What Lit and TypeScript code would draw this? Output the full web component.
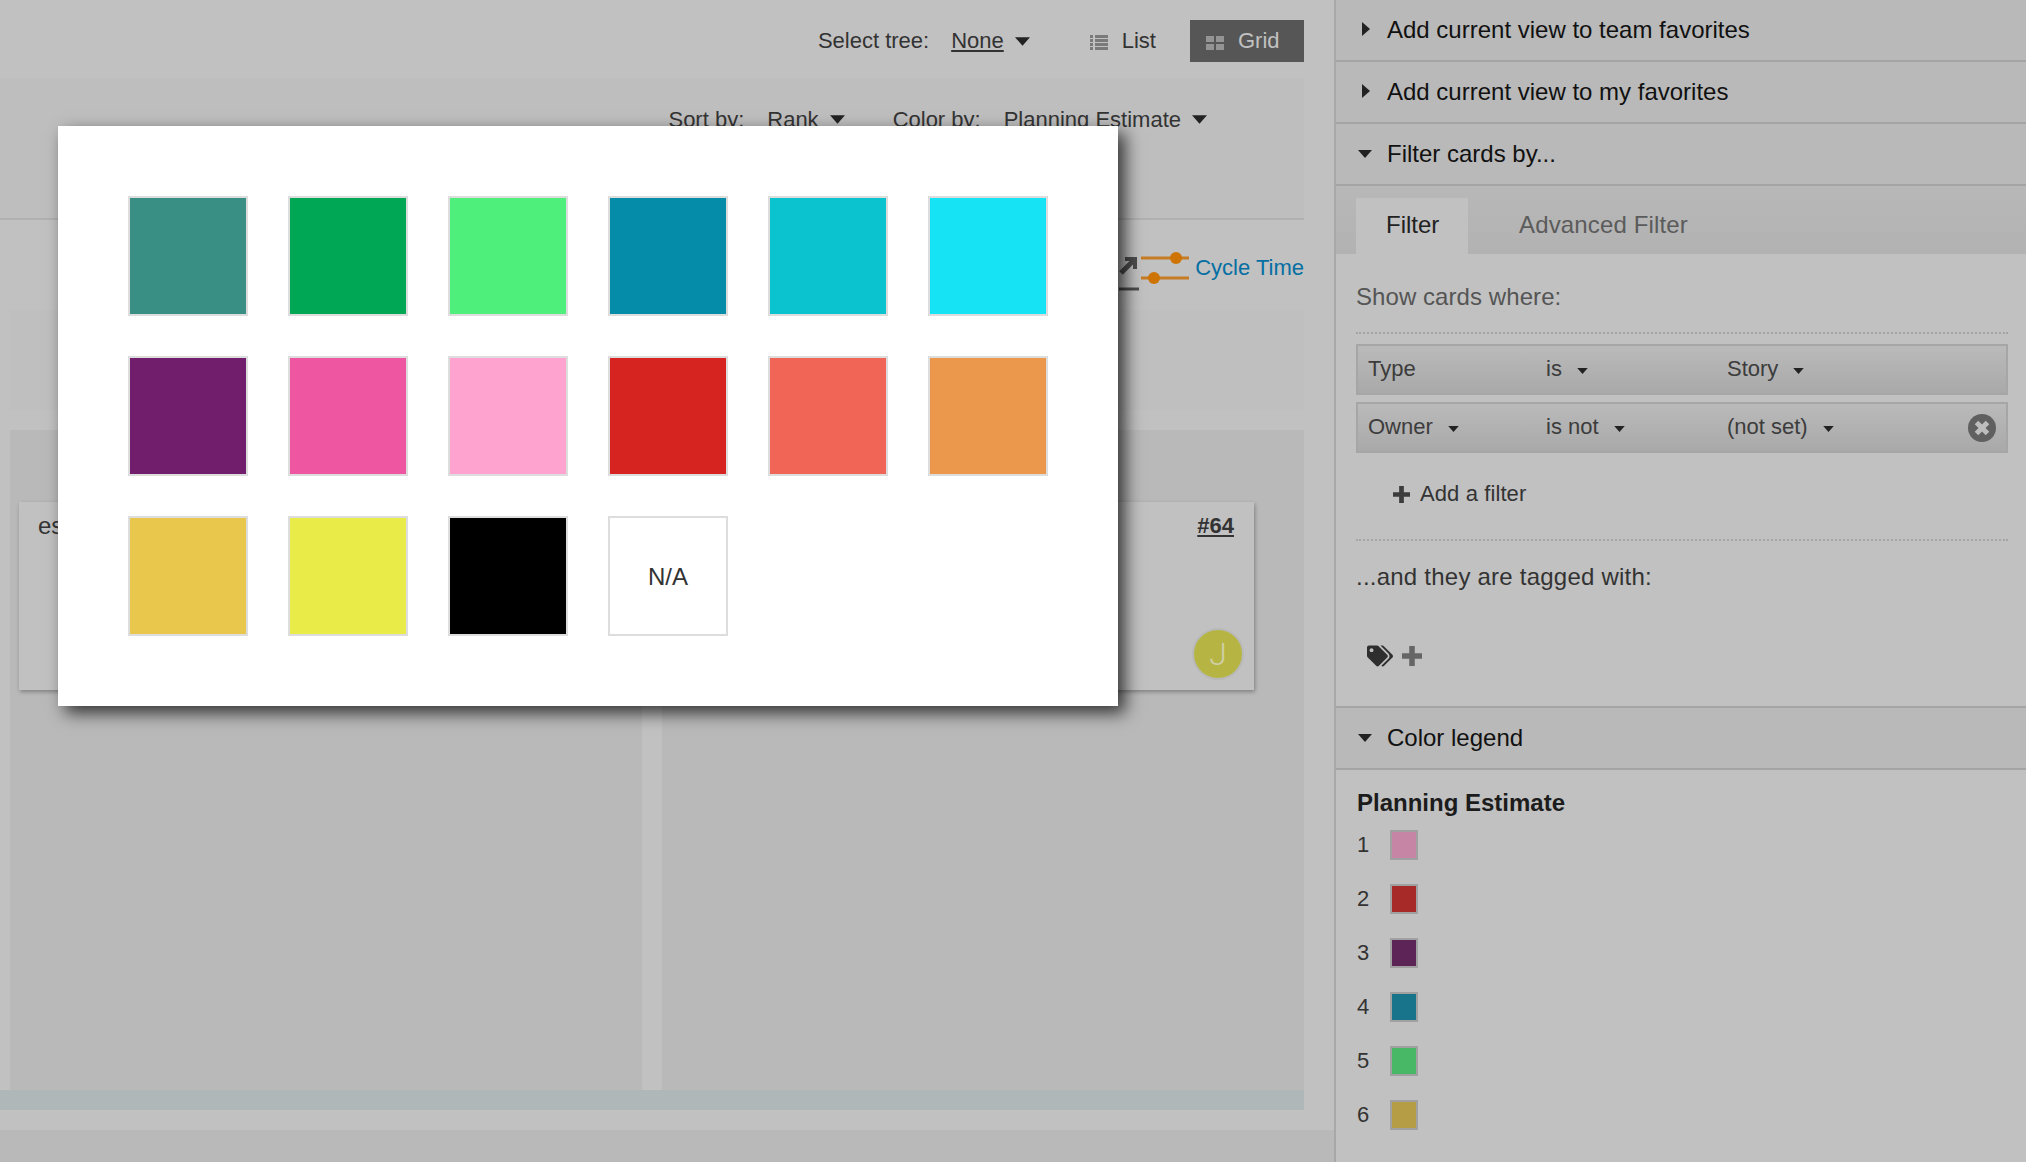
import { LitElement, html, css, svg } from 'lit';
import { customElement } from 'lit/decorators.js';

const SWATCHES = [
  '#398f83', '#00a755', '#4fef7b', '#058ca8', '#0bc2cf', '#16e4f4',
  '#711e6c', '#ee56a2', '#fea3d0', '#d62520', '#f06555', '#ec984c',
  '#e9c64c', '#e9ec48', '#000000',
];

const LEGEND = [
  ['1', '#c785a6'],
  ['2', '#a72a28'],
  ['3', '#5c2457'],
  ['4', '#17748a'],
  ['5', '#49b866'],
  ['6', '#b49d45'],
];

const caret = (w: number, h: number, cls = '') => html`
  <svg class="caret ${cls}" width=${w} height=${h} viewBox="0 0 14 8"><path d="M0 0h14L7 8z" /></svg>
`;

const arrowRight = html`
  <svg class="caret" width="8" height="14" viewBox="0 0 8 14"><path d="M0 0l8 7-8 7z" /></svg>
`;

const plus = (size: number, color: string) => html`
  <svg width=${size} height=${size} viewBox="0 0 18 18" style="fill:${color}"><path d="M6.5 0h5v6.5H18v5h-6.5V18h-5v-6.5H0v-5h6.5z" /></svg>
`;

const tagsPath = svg`<path d="M497.941 225.941L286.059 14.059A48 48 0 0 0 252.118 0H48C21.49 0 0 21.49 0 48v204.118a48 48 0 0 0 14.059 33.941l211.882 211.882c18.744 18.745 49.136 18.746 67.882 0l204.118-204.118c18.745-18.745 18.745-49.137 0-67.882zM112 160c-26.51 0-48-21.49-48-48s21.49-48 48-48 48 21.49 48 48-21.49 48-48 48zm513.941 133.823L421.823 497.941c-18.745 18.745-49.137 18.745-67.882 0l-.36-.36L527.64 323.522c16.999-16.999 26.36-39.6 26.36-63.64s-9.362-46.641-26.36-63.64L331.397 0h48.721a48 48 0 0 1 33.941 14.059l211.882 211.882c18.745 18.745 18.745 49.137 0 67.882z" />`;

@customElement('app-root')
export class AppRoot extends LitElement {
  static styles = css`
    :host {
      display: block;
      position: relative;
      width: 2026px;
      height: 1162px;
      overflow: hidden;
      background: #c1c1c1;
      font-family: 'Liberation Sans', Arial, sans-serif;
      font-size: 22px;
      color: #333;
    }

    * {
      box-sizing: border-box;
    }

    .page {
      display: flex;
      height: 100%;
    }

    .caret {
      fill: #222;
      flex: none;
    }

    /* left side */
    .left {
      width: 1336px;
      flex: none;
      display: flex;
      flex-direction: column;
      border-right: 2px solid #a8a8a8;
    }

    .main {
      width: 1304px;
      flex: none;
    }

    .topbar {
      height: 78px;
      padding-top: 4px;
      display: flex;
      align-items: center;
      justify-content: flex-end;
    }

    .tree-label {
      margin-right: 22px;
    }

    .tree-value {
      text-decoration: underline;
      margin-right: 11px;
    }

    .view-list {
      display: flex;
      align-items: center;
      gap: 14px;
      margin: 0 34px 0 60px;
    }

    .view-list svg,
    .view-grid svg {
      margin-top: 3px;
    }

    .view-grid {
      display: flex;
      align-items: center;
      gap: 14px;
      width: 114px;
      height: 42px;
      padding-left: 16px;
      background: #565656;
      color: #c1c1c1;
    }

    .tools {
      height: 142px;
      padding: 28px 97px 0 0;
      display: flex;
      justify-content: flex-end;
      align-items: flex-start;
      line-height: 28px;
      background: #bebebe;
      border-bottom: 2px solid #b0b0b0;
    }

    .tools .label {
      margin-right: 23px;
    }

    .tools .label.color {
      margin-right: 23px;
      margin-left: 1px;
    }

    .tools .value {
      margin-right: 11px;
    }

    .tools .caret {
      margin-top: 9px;
    }

    .tools .caret.first {
      margin-right: 47px;
    }

    .cycle {
      height: 90px;
      display: flex;
      align-items: center;
      justify-content: flex-end;
      color: #046fa3;
      padding-top: 6px;
    }

    .cycle-arrow {
      margin-right: 2px;
      margin-top: 12px;
    }

    .cycle-icon {
      margin-right: 6px;
    }

    .band {
      height: 100px;
      margin-left: 10px;
      background: #bfbfbf;
    }

    .board {
      height: 660px;
      margin: 20px 0 0 10px;
      display: grid;
      grid-template-columns: 632px 642px;
      gap: 20px;
    }

    .column {
      background: #b9b9b9;
      padding-top: 72px;
    }

    .column.first {
      padding-left: 9px;
      padding-right: 40px;
    }

    .column.second {
      padding-left: 40px;
      padding-right: 50px;
    }

    .card {
      height: 188px;
      background: #c1c1c1;
      box-shadow: 1px 2px 4px rgba(0, 0, 0, 0.3);
      font-size: 24px;
      display: flex;
      flex-direction: column;
    }

    .card .desc {
      padding: 10px 0 0 19px;
    }

    .card .id {
      align-self: flex-end;
      margin: 11px 20px 0 0;
      font-size: 22px;
      font-weight: bold;
      text-decoration: underline;
      line-height: 26px;
    }

    .avatar {
      align-self: flex-end;
      margin: auto 10px 10px 0;
      width: 52px;
      height: 52px;
      border-radius: 50%;
      background: #b6b543;
      border: 2px solid #b9b9b9;
      color: #cfcfa5;
      font-family: Roboto, sans-serif;
      font-size: 32px;
      font-weight: 300;
      display: flex;
      align-items: center;
      justify-content: center;
    }

    .hscroll {
      height: 20px;
      background: #afb7b9;
    }

    .gutter {
      height: 20px;
    }

    .footer {
      flex: 1;
      background: #b9b9b9;
    }

    /* sidebar */
    .side {
      flex: 1;
      min-width: 0;
    }

    .head {
      height: 62px;
      display: flex;
      align-items: center;
      position: relative;
      padding-left: 51px;
      font-size: 24px;
      color: #111;
      background: #b9b9b9;
      border-bottom: 2px solid #a4a4a4;
    }

    .head .caret {
      position: absolute;
      left: 26px;
      top: 22px;
    }

    .head .caret.down {
      left: 22px;
      top: 26px;
    }

    .head.top-line {
      height: 64px;
      border-top: 2px solid #a4a4a4;
    }

    .tabs {
      height: 68px;
      padding: 12px 0 0 20px;
      display: flex;
      background: linear-gradient(#b8b8b8, #b2b2b2);
      font-size: 24px;
    }

    .tab {
      height: 54px;
      display: flex;
      align-items: center;
      padding: 0 30px;
      color: #5b5b5b;
      letter-spacing: 0.15px;
    }

    .tab.on {
      height: 56px;
      padding-bottom: 2px;
      width: 112px;
      padding-left: 30px;
      padding-right: 0;
      background: #c1c1c1;
      color: #222;
      margin-right: 21px;
      letter-spacing: 0;
    }

    .filter {
      height: 452px;
      padding: 29px 18px 0 20px;
    }

    .hint {
      line-height: 28px;
      font-size: 24px;
      letter-spacing: 0.07px;
      color: #555;
    }

    .tagged {
      line-height: 28px;
      font-size: 24px;
      letter-spacing: 0.23px;
      margin-top: 22px;
    }

    .dots {
      border-top: 2px dotted #a4a4a4;
    }

    .dots.one {
      margin-top: 21px;
    }

    .dots.two {
      margin-top: 31px;
    }

    .rule {
      height: 51px;
      margin-top: 10px;
      padding: 0 0 2px 10px;
      display: grid;
      grid-template-columns: 178px 181px 1fr;
      align-items: center;
      position: relative;
      border: 2px solid #a6a6a6;
      background: linear-gradient(#bababa, #a9a9a9);
      color: #3c3c3c;
    }

    .rule + .rule {
      margin-top: 7px;
    }

    .rule span {
      display: flex;
      align-items: center;
      gap: 15px;
    }

    .rule .caret {
      margin-top: 5px;
    }

    .rule .x {
      position: absolute;
      right: 10px;
      top: 10px;
    }

    .add {
      margin: 27px 0 0 37px;
      line-height: 28px;
      letter-spacing: 0.1px;
      display: flex;
      align-items: center;
      gap: 10px;
    }

    .tags {
      margin: 54px 0 0 11px;
      display: flex;
      align-items: center;
      gap: 9px;
      height: 22px;
    }

    .legend {
      padding: 19px 0 0 21px;
    }

    .legend h3 {
      margin: 0 0 13px;
      font-size: 24px;
      line-height: 28px;
      color: #1c1c1c;
    }

    .legend-row {
      display: flex;
      align-items: center;
      height: 30px;
      margin-bottom: 24px;
    }

    .legend-row b {
      width: 33px;
      font-weight: normal;
    }

    .legend-row i {
      width: 28px;
      height: 30px;
      border: 2px solid #a0a0a0;
    }

    /* colour picker */
    .picker {
      position: absolute;
      left: 58px;
      top: 126px;
      width: 1060px;
      height: 580px;
      padding: 70px;
      background: #fff;
      box-shadow: 7px 7px 16px rgba(0, 0, 0, 0.72);
      display: grid;
      grid-template-columns: repeat(6, 120px);
      grid-auto-rows: 120px;
      gap: 40px;
    }

    .swatch {
      border: 2px solid #ddd;
    }

    .swatch.na {
      display: flex;
      align-items: center;
      justify-content: center;
      padding-top: 2px;
      font-size: 24px;
      color: #333;
    }
  `;

  render() {
    return html`
      <div class="page">
        <div class="left">
          <div class="main">
            <div class="topbar">
              <span class="tree-label">Select tree:</span>
              <span class="tree-value">None</span>
              ${caret(15, 9)}
              <span class="view-list">
                <svg width="18" height="15" viewBox="0 0 18 15" fill="#7a7a7a">
                  <path d="M0 0h3v3H0zM5 0h13v3H5zM0 4h3v3H0zM5 4h13v3H5zM0 8h3v3H0zM5 8h13v3H5zM0 12h3v3H0zM5 12h13v3H5z" />
                </svg>
                List
              </span>
              <span class="view-grid">
                <svg width="18" height="14" viewBox="0 0 18 14" fill="#949494">
                  <path d="M0 0h8v6H0zM10 0h8v6h-8zM0 8h8v6H0zM10 8h8v6h-8z" />
                </svg>
                Grid
              </span>
            </div>
            <div class="tools">
              <span class="label">Sort by:</span>
              <span class="value">Rank</span>
              ${caret(15, 9, 'first')}
              <span class="label color">Color by:</span>
              <span class="value">Planning Estimate</span>
              ${caret(15, 9)}
            </div>
            <div class="cycle">
              <svg class="cycle-arrow" width="20" height="36" viewBox="0 0 20 36" fill="none" stroke="#4d4d4d">
                <path d="M2 17L14 5" stroke-width="5" />
                <path d="M6 3h10v10" stroke-width="4" />
                <path d="M0 33h20" stroke-width="3" />
              </svg>
              <svg class="cycle-icon" width="48" height="32" viewBox="0 0 48 32">
                <path d="M0 6h48M0 26h48" stroke="#c67c24" stroke-width="3" />
                <circle cx="35" cy="6" r="6" fill="#ce7405" />
                <circle cx="13" cy="26" r="6" fill="#ce7405" />
              </svg>
              Cycle Time
            </div>
            <div class="band"></div>
            <div class="board">
              <div class="column first">
                <div class="card"><div class="desc">es</div></div>
              </div>
              <div class="column second">
                <div class="card">
                  <span class="id">#64</span>
                  <span class="avatar">J</span>
                </div>
              </div>
            </div>
            <div class="hscroll"></div>
            <div class="gutter"></div>
          </div>
          <div class="footer"></div>
        </div>

        <div class="side">
          <div class="head">${arrowRight}Add current view to team favorites</div>
          <div class="head">${arrowRight}Add current view to my favorites</div>
          <div class="head">${caret(14, 8, 'down')}Filter cards by...</div>
          <div class="tabs">
            <div class="tab on">Filter</div>
            <div class="tab">Advanced Filter</div>
          </div>
          <div class="filter">
            <div class="hint">Show cards where:</div>
            <div class="dots one"></div>
            <div class="rule">
              <span>Type</span>
              <span>is ${caret(11, 6)}</span>
              <span>Story ${caret(11, 6)}</span>
            </div>
            <div class="rule">
              <span>Owner ${caret(11, 6)}</span>
              <span>is not ${caret(11, 6)}</span>
              <span>(not set) ${caret(11, 6)}</span>
              <svg class="x" width="28" height="28" viewBox="0 0 28 28">
                <circle cx="14" cy="14" r="14" fill="#606060" />
                <path d="M8.5 8.5l11 11M19.5 8.5l-11 11" stroke="#bdbdbd" stroke-width="5" />
              </svg>
            </div>
            <div class="add">${plus(17, '#3c3c3c')} Add a filter</div>
            <div class="dots two"></div>
            <div class="tagged">...and they are tagged with:</div>
            <div class="tags">
              <svg width="26" height="22" viewBox="0 0 640 512" fill="#2e2e2e">${tagsPath}</svg>
              ${plus(20, '#666')}
            </div>
          </div>
          <div class="head top-line">${caret(14, 8, 'down')}Color legend</div>
          <div class="legend">
            <h3>Planning Estimate</h3>
            ${LEGEND.map(
              ([label, color]) => html`
                <div class="legend-row">
                  <b>${label}</b>
                  <i style="background:${color}"></i>
                </div>
              `
            )}
          </div>
        </div>
      </div>

      <div class="picker">
        ${SWATCHES.map((color) => html`<div class="swatch" style="background:${color}"></div>`)}
        <div class="swatch na">N/A</div>
      </div>
    `;
  }
}
